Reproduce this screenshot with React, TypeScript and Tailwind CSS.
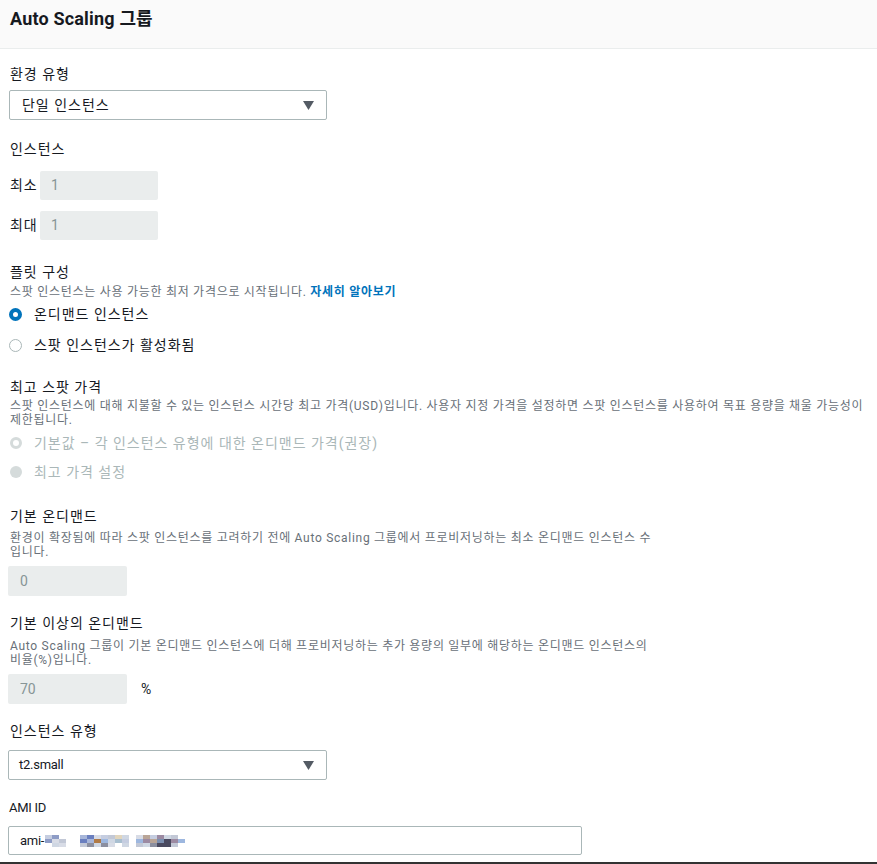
import React from "react";

const FONT = { fontFamily: 'Roboto, "Noto Sans CJK KR", "Noto Sans", sans-serif' };

function Caret() {
  return (
    <svg width="11" height="9" viewBox="0 0 11 9" className="shrink-0">
      <path d="M0 0 H11 L5.5 9 Z" fill="#545b64" />
    </svg>
  );
}

function Radio({ checked, disabled, label }: { checked?: boolean; disabled?: boolean; label: string }) {
  let circle;
  if (disabled && checked) {
    circle = <span className="w-[12px] h-[12px] rounded-full border-[3px] border-[#d5dbdb] bg-white" />;
  } else if (disabled) {
    circle = <span className="w-[12px] h-[12px] rounded-full bg-[#d5dbdb]" />;
  } else if (checked) {
    circle = <span className="w-[13px] h-[13px] rounded-full border-[4px] border-[#0073bb] bg-white" />;
  } else {
    circle = <span className="w-[13px] h-[13px] rounded-full border border-[#aab7b8] bg-white" />;
  }
  return (
    <div className="flex items-center h-[20px]">
      <span className="w-[13px] flex justify-center ml-[9px]">{circle}</span>
      <span className={`ml-[12px] text-[14px] tracking-[0.07em] ${disabled ? "text-[#aab7b8]" : "text-[#16191f]"}`}>{label}</span>
    </div>
  );
}

const P = [
  "#c5cde0", "#8e9cc6", "#6a7fbf", "#d8dce6", "#a7b6d9", "#b07a45", "#9db7df", "#cfd7e3",
  "#e1d5bd", "#a8bfd0", "#7b8fb0", "#b9a597", "#9c8aa2", "#4a4a60", "#8b8fa0", "#c2c8d6",
];
const pixelRows: number[][] = [
  [0, 1, -1, -1, -1, 4, 2, 3, 0, 15, 8, 7, -1, 3, 11, 0, 12, 7, 15, -1],
  [1, 3, 15, -1, -1, 2, 4, 5, 6, 7, 9, 0, -1, 6, 12, 11, 10, 13, 12, 6],
  [-1, 7, 3, -1, -1, 15, 14, 7, 14, 3, -1, 7, -1, 15, 7, 14, 13, 13, 15, -1],
];

function Pixelated() {
  return (
    <div className="flex flex-col ml-[1px]">
      {pixelRows.map((row, i) => (
        <div key={i} className="flex">
          {row.map((c, j) => (
            <span key={j} className="w-[7px] h-[4px]" style={{ backgroundColor: c >= 0 ? P[c] : "transparent" }} />
          ))}
        </div>
      ))}
    </div>
  );
}

const label = "text-[14px] leading-[20px] tracking-[0.07em] ml-[1px]";
const desc = "text-[12px] leading-[14px] tracking-[0.06em] text-[#687078] ml-[1px]";
const latin = "text-[13px] tracking-[-0.02em]";

export default function App() {
  return (
    <div style={FONT} className="w-[877px] h-[864px] bg-white text-[#16191f] flex flex-col overflow-hidden">
      <div className="h-[49px] shrink-0 bg-[#fafafa] border-b border-[#eaeded] flex items-start pt-[7px] px-[10px]">
        <h2 className="text-[18px] leading-[24px] font-bold tracking-[0.01em] text-[#16191f]">Auto Scaling 그룹</h2>
      </div>

      <div className="flex-1 flex flex-col pl-[9px]">
        {/* 환경 유형 */}
        <div className={`mt-[15px] ${label}`}>환경 유형</div>
        <div className="mt-[6px] w-[318px] h-[30px] border border-[#aab7b8] rounded-[2px] flex items-center justify-between pl-[12px] pr-[12px] text-[14px] tracking-[0.07em]">
          <span>단일 인스턴스</span>
          <Caret />
        </div>

        {/* 인스턴스 */}
        <div className={`mt-[19px] ${label}`}>인스턴스</div>
        <div className="mt-[12px] flex items-center">
          <span className="text-[14px] tracking-[0.07em] w-[30px] ml-[1px]">최소</span>
          <div className="w-[118px] h-[29px] bg-[#eaeded] rounded-[2px] flex items-center pl-[11px] text-[14px] text-[#879596]">1</div>
        </div>
        <div className="mt-[11px] flex items-center">
          <span className="text-[14px] tracking-[0.07em] w-[30px] ml-[1px]">최대</span>
          <div className="w-[118px] h-[29px] bg-[#eaeded] rounded-[2px] flex items-center pl-[11px] text-[14px] text-[#879596]">1</div>
        </div>

        {/* 플릿 구성 */}
        <div className={`mt-[22px] ${label}`}>플릿 구성</div>
        <div className={`mt-[2px] ${desc} leading-[16px]`}>
          스팟 인스턴스는 사용 가능한 최저 가격으로 시작됩니다. <span className="font-bold text-[#0073bb]">자세히 알아보기</span>
        </div>
        <div className="mt-[4px] flex flex-col gap-[11px] -ml-[9px]">
          <Radio checked label="온디맨드 인스턴스" />
          <Radio label="스팟 인스턴스가 활성화됨" />
        </div>

        {/* 최고 스팟 가격 */}
        <div className={`mt-[22px] ${label}`}>최고 스팟 가격</div>
        <div className={`mt-[2px] ${desc} w-[864px]`}>
          스팟 인스턴스에 대해 지불할 수 있는 인스턴스 시간당 최고 가격(USD)입니다. 사용자 지정 가격을 설정하면 스팟 인스턴스를 사용하여 목표 용량을 채울 가능성이 제한됩니다.
        </div>
        <div className="mt-[6px] flex flex-col gap-[9px] -ml-[9px]">
          <Radio checked disabled label="기본값 – 각 인스턴스 유형에 대한 온디맨드 가격(권장)" />
          <Radio disabled label="최고 가격 설정" />
        </div>

        {/* 기본 온디맨드 */}
        <div className={`mt-[24px] ${label}`}>기본 온디맨드</div>
        <div className={`mt-[5px] ${desc} w-[652px]`}>
          환경이 확장됨에 따라 스팟 인스턴스를 고려하기 전에 Auto Scaling 그룹에서 프로비저닝하는 최소 온디맨드 인스턴스 수입니다.
        </div>
        <div className="mt-[7px] w-[119px] h-[30px] bg-[#eaeded] rounded-[2px] flex items-center pl-[12px] text-[14px] text-[#879596] -ml-[1px]">0</div>

        {/* 기본 이상의 온디맨드 */}
        <div className={`mt-[17px] ${label}`}>기본 이상의 온디맨드</div>
        <div className={`mt-[6px] ${desc} w-[652px]`}>
          Auto Scaling 그룹이 기본 온디맨드 인스턴스에 더해 프로비저닝하는 추가 용량의 일부에 해당하는 온디맨드 인스턴스의 비율(%)입니다.
        </div>
        <div className="mt-[7px] flex items-center -ml-[1px]">
          <div className="w-[119px] h-[30px] bg-[#eaeded] rounded-[2px] flex items-center pl-[12px] text-[14px] text-[#879596]">70</div>
          <span className="ml-[14px] text-[14px] text-[#16191f]">%</span>
        </div>

        {/* 인스턴스 유형 */}
        <div className={`mt-[17px] ${label}`}>인스턴스 유형</div>
        <div className="mt-[9px] w-[319px] h-[30px] border border-[#aab7b8] rounded-[2px] flex items-center justify-between pl-[10px] pr-[12px] -ml-[1px]">
          <span className={latin}>t2.small</span>
          <Caret />
        </div>

        {/* AMI ID */}
        <div className={`mt-[18px] leading-[20px] ${latin}`}>AMI ID</div>
        <div className="mt-[8px] w-[574px] h-[29px] border border-[#aab7b8] rounded-[2px] flex items-center pl-[11px] -ml-[1px]">
          <span className={latin}>ami-</span>
          <Pixelated />
        </div>
      </div>
      <div className="h-[2px] bg-[#333333] shrink-0" />
    </div>
  );
}
